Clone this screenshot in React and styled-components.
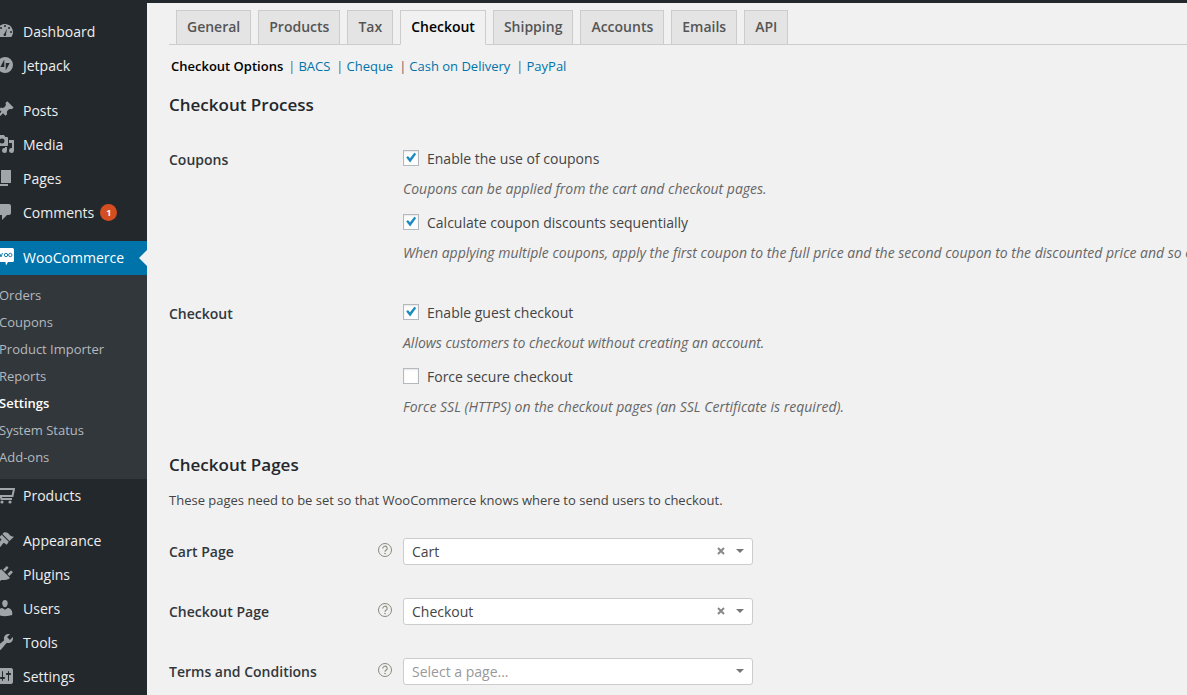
import React from 'react';
import styled, { createGlobalStyle } from 'styled-components';

const GlobalStyle = createGlobalStyle`
	html, body {
		margin: 0;
		padding: 0;
		background: #f1f1f1;
		overflow: hidden;
	}
	body {
		font-family: "Open Sans", "Liberation Sans", sans-serif;
		font-size: 14px;
		color: #444;
	}
`;

const icons = {
	dashboard: <><path fillRule="evenodd" d="M3.760 16h12.480C17.340 14.630 18 12.890 18 11c0-4.420-3.580-8-8-8s-8 3.580-8 8c0 1.890.66 3.630 1.760 5zM10 4a1 1 0 1 1 0 2 1 1 0 0 1 0-2zM6 6a1 1 0 1 1 0 2 1 1 0 0 1 0-2zm8 0a1 1 0 1 1 0 2 1 1 0 0 1 0-2zM4 10a1 1 0 1 1 0 2 1 1 0 0 1 0-2zm12 0a1 1 0 1 1 0 2 1 1 0 0 1 0-2z" /><path d="M12 7.500 9.500 12.500a1.300 1.300 0 1 0 1.500.6z" fill="#23282d" /></>,
	jetpack: <path fillRule="evenodd" d="M10 2a8 8 0 1 0 0 16 8 8 0 0 0 0-16zM9.300 4.500v7.500H5.300zM10.700 15.500V8h4z" />,
	posts: <path d="M10.440 3.020l1.820-1.820 6.360 6.350-1.830 1.820c-1.050-.68-2.480-.57-3.410.36l-.75.75c-.92.930-1.040 2.350-.35 3.410l-1.830 1.820-2.410-2.410-2.800 2.790c-.42.420-3.380 2.710-3.800 2.290s1.860-3.390 2.280-3.810l2.790-2.790L4.100 9.360l1.830-1.820c1.050.69 2.480.57 3.400-.36l.75-.75c.93-.92 1.050-2.350.36-3.410z" />,
	media: <path fillRule="evenodd" d="M13 11V4c0-.55-.45-1-1-1h-1.670L9 1H5L3.670 3H2c-.55 0-1 .45-1 1v7c0 .55.45 1 1 1h10c.55 0 1-.45 1-1zM7 4.500a2.500 2.500 0 1 1 0 5 2.500 2.500 0 0 1 0-5zM14 6h5v10.500a2.500 2.500 0 1 1-2-2.450V9h-3V6zm-4 8.050V13h2v3.500a2.500 2.500 0 1 1-2-2.450z" />,
	pages: <path d="M6 15V2h10v13H6zm-1 1h8v2H3V5h2v11z" />,
	comments: <path d="M5 2h9c1.100 0 2 .9 2 2v7c0 1.100-.9 2-2 2h-2l-5 5v-5H5c-1.100 0-2-.9-2-2V4c0-1.100.9-2 2-2z" />,
	products: <><path d="M2 4h17l-1.500 7H5.500L6.500 14H17" fill="none" stroke="#a0a5aa" strokeWidth="2" /><circle cx="7" cy="17" r="1.600" /><circle cx="15" cy="17" r="1.600" /></>,
	appearance: <path d="M14.480 11.060 7.410 3.990l1.500-1.500c.5-.56 2.300-.47 3.510.32 1.210.8 1.430 1.280 2.660 2.420 1.200 1.100 2.300 1.500 3.920 1.400zm-.71.71L6.700 4.700 4.930 6.470c-.39.390-.39 1.020 0 1.410l1.060 1.060c.39.390.39 1.030 0 1.420-.6.600-1.430 1.110-2.210 1.690-.35.260-.7.530-1.010.840C1.430 13.230.7 14.700 1.200 15.200s3.300 2.600 4.500 1.300c.3-.3.600-.7.860-1.050.58-.78 1.080-1.610 1.680-2.210.39-.39 1.030-.39 1.420 0l1.060 1.060c.39.390 1.020.39 1.410 0z" />,
	plugins: <path d="M13.110 4.360 9.870 7.600 8 5.730l3.240-3.240c.35-.34 1.050-.2 1.560.32.520.510.660 1.210.310 1.550zm-8 1.770.91-1.120 9.010 9.010-1.190.84c-.71.710-2.630 1.160-3.820 1.160H6.140L4.900 17.260c-.59.590-1.540.590-2.120 0-.59-.580-.59-1.530 0-2.120l1.240-1.240v-3.880c0-1.130.46-3.050 1.090-3.890zm7.260 3.970 3.240-3.240c.34-.35 1.040-.21 1.550.31.520.510.660 1.210.310 1.550l-3.240 3.250z" />,
	users: <path d="M10 9.250c-2.270 0-2.730-3.440-2.730-3.440C7 4.020 7.820 2 9.970 2c2.160 0 2.980 2.020 2.710 3.810 0 0-.41 3.440-2.680 3.440zm0 2.570L12.720 10c2.390 0 4.520 2.330 4.520 4.530v2.490s-3.650 1.130-7.240 1.130c-3.650 0-7.240-1.130-7.240-1.130v-2.490c0-2.250 1.940-4.480 4.470-4.480z" />,
	tools: <path d="M16.680 9.770c-1.340 1.340-3.300 1.670-4.950.99l-5.410 6.520c-.99.990-2.590.990-3.580 0s-.99-2.590 0-3.580l6.520-5.420c-.68-1.650-.35-3.610.99-4.950 1.280-1.280 3.120-1.640 4.720-1.110l-2.900 2.890 2.820 2.820 2.860-2.860c.53 1.600.17 3.440-1.110 4.720z" />,
	settings: <path fillRule="evenodd" d="M18 16V4c0-1.100-.9-2-2-2H4c-1.100 0-2 .9-2 2v12c0 1.100.9 2 2 2h12c1.100 0 2-.9 2-2zM8 11h1c.55 0 1 .45 1 1s-.45 1-1 1H8v1.500c0 .28-.22.5-.5.5s-.5-.22-.5-.5V13H6c-.55 0-1-.45-1-1s.45-1 1-1h1V5.500c0-.28.22-.5.5-.5s.5.220.5.5V11zm5-2h-1c-.55 0-1-.45-1-1s.45-1 1-1h1V5.500c0-.28.22-.5.5-.5s.5.220.5.5V7h1c.55 0 1 .45 1 1s-.45 1-1 1h-1v5.500c0 .28-.22.5-.5.5s-.5-.22-.5-.5V9z" />,
};

const menuTop = [
	[['dashboard', 'Dashboard'], ['jetpack', 'Jetpack']],
	[['posts', 'Posts'], ['media', 'Media'], ['pages', 'Pages'], ['comments', 'Comments', 1]],
];

const menuBottom = [
	[['products', 'Products']],
	[['appearance', 'Appearance'], ['plugins', 'Plugins'], ['users', 'Users'], ['tools', 'Tools'], ['settings', 'Settings']],
];

const subItems = ['Orders', 'Coupons', 'Product Importer', 'Reports', 'Settings', 'System Status', 'Add-ons'];
const tabs = ['General', 'Products', 'Tax', 'Checkout', 'Shipping', 'Accounts', 'Emails', 'API'];
const sections = ['BACS', 'Cheque', 'Cash on Delivery', 'PayPal'];

const MenuGroups = ({ groups }) => groups.map((group, i) => (
	<MenuGroup key={i}>
		{group.map(([icon, label, count]) => (
			<MenuItem key={label}>
				<MenuIcon viewBox="0 0 20 20">{icons[icon]}</MenuIcon>
				{label}
				{count && <Badge>{count}</Badge>}
			</MenuItem>
		))}
	</MenuGroup>
));

const CheckOption = ({ checked, label, description }) => (
	<>
		<OptionRow>
			<CheckBox>
				{checked && (
					<svg viewBox="0 0 16 16" width="16" height="16">
						<path d="M2.500 7.500 4.500 5.800 6.800 8.300 11.800 2 14 3.500 7 13z" fill="#1e8cbe" />
					</svg>
				)}
			</CheckBox>
			{label}
		</OptionRow>
		<Description>{description}</Description>
	</>
);

const HelpTip = () => (
	<HelpIcon viewBox="0 0 16 16">
		<circle cx="8" cy="8" r="6.500" fill="none" stroke="#8a8a7a" strokeWidth="1" />
		<path d="M5.800 6.400A2.200 2.200 0 1 1 9 8.300c-.7.400-1 .7-1 1.500" fill="none" stroke="#8a8a7a" strokeWidth="1.100" />
		<circle cx="8" cy="11.500" r=".8" fill="#8a8a7a" />
	</HelpIcon>
);

const PageSelect = ({ label, value, placeholder }) => (
	<SelectRow>
		<SelectLabel>{label}</SelectLabel>
		<HelpTip />
		<SelectBox>
			<SelectValue $placeholder={!value}>{value || placeholder}</SelectValue>
			{value && (
				<ClearIcon viewBox="0 0 8 8">
					<path d="M1 1l6 6M7 1 1 7" stroke="#888" strokeWidth="2" />
				</ClearIcon>
			)}
			<Caret />
		</SelectBox>
	</SelectRow>
);

const App = () => (
	<>
		<GlobalStyle />
		<Page>
			<Sidebar>
				<MenuGroups groups={menuTop} />
				<ActiveItem>
					<WooLogo viewBox="0 0 20 20">
						<path d="M1.500 1h16A1.500 1.500 0 0 1 19 2.500v11a1.500 1.500 0 0 1-1.500 1.500H13l-2 3.500-.5-3.500h-9A1.500 1.500 0 0 1 0 13.500v-11A1.500 1.500 0 0 1 1.500 1z" fill="#fff" />
						<path d="M2.500 6l1 4 1.500-3 1 3L7.500 6" fill="none" stroke="#0073aa" strokeWidth=".9" />
						<circle cx="11" cy="8" r="1.700" fill="none" stroke="#0073aa" strokeWidth=".9" />
						<circle cx="15.300" cy="8" r="1.700" fill="none" stroke="#0073aa" strokeWidth=".9" />
					</WooLogo>
					WooCommerce
					<ActiveArrow />
				</ActiveItem>
				<SubMenu>
					{subItems.map((item) => (
						<SubItem key={item} $current={item === 'Settings'}>{item}</SubItem>
					))}
				</SubMenu>
				<MenuGroups groups={menuBottom} />
			</Sidebar>
			<Main>
				<TabBar>
					{tabs.map((tab) => (
						<Tab key={tab} $active={tab === 'Checkout'}>{tab}</Tab>
					))}
				</TabBar>
				<SubNav>
					<strong>Checkout Options</strong>
					{sections.map((section) => (
						<SubNavItem key={section}>
							<Divider>|</Divider>
							<SubNavLink>{section}</SubNavLink>
						</SubNavItem>
					))}
				</SubNav>

				<ProcessHeading>Checkout Process</ProcessHeading>
				<FormTable>
					<FormRow>
						<RowLabel>Coupons</RowLabel>
						<div>
							<CheckOption checked label="Enable the use of coupons" description="Coupons can be applied from the cart and checkout pages." />
							<CheckOption checked label="Calculate coupon discounts sequentially" description="When applying multiple coupons, apply the first coupon to the full price and the second coupon to the discounted price and so on." />
						</div>
					</FormRow>
					<FormRow>
						<RowLabel>Checkout</RowLabel>
						<div>
							<CheckOption checked label="Enable guest checkout" description="Allows customers to checkout without creating an account." />
							<CheckOption label="Force secure checkout" description="Force SSL (HTTPS) on the checkout pages (an SSL Certificate is required)." />
						</div>
					</FormRow>
				</FormTable>

				<PagesHeading>Checkout Pages</PagesHeading>
				<Intro>These pages need to be set so that WooCommerce knows where to send users to checkout.</Intro>
				<PageSelect label="Cart Page" value="Cart" />
				<PageSelect label="Checkout Page" value="Checkout" />
				<PageSelect label="Terms and Conditions" placeholder="Select a page..." />
			</Main>
		</Page>
	</>
);

const Page = styled.div`
	display: flex;
	height: 695px;
	width: 1187px;
	overflow: hidden;
	background: #f1f1f1;
	border-top: 3px solid #23282d;
	box-sizing: border-box;
`;

const Sidebar = styled.nav`
	width: 147px;
	flex-shrink: 0;
	background: #23282d;
	padding-top: 12px;
	overflow: hidden;
`;

const MenuGroup = styled.div`
	margin-bottom: 11px;

	&:last-of-type {
		margin-bottom: 0;
	}
`;

const MenuItem = styled.div`
	display: flex;
	align-items: center;
	height: 34px;
	box-sizing: border-box;
	padding-bottom: 2px;
	color: #eee;
	white-space: nowrap;
`;

const MenuIcon = styled.svg`
	width: 20px;
	height: 20px;
	flex-shrink: 0;
	margin: 0 8px 0 -5px;
	fill: #a0a5aa;
`;

const Badge = styled.span`
	display: inline-flex;
	align-items: center;
	justify-content: center;
	width: 17px;
	height: 17px;
	margin-left: 6px;
	border-radius: 50%;
	background: #d54e21;
	color: #fff;
	font-size: 9px;
	font-weight: 700;
`;

const ActiveItem = styled(MenuItem)`
	position: relative;
	background: #0073aa;
	color: #fff;
`;

const WooLogo = styled.svg`
	width: 20px;
	height: 20px;
	flex-shrink: 0;
	margin: 0 8px 0 -5px;
`;

const ActiveArrow = styled.span`
	position: absolute;
	right: 0;
	top: 50%;
	margin-top: -8px;
	border: 8px solid transparent;
	border-right-color: #f1f1f1;
	border-left-width: 0;
`;

const SubMenu = styled.div`
	background: #32373c;
	padding: 7px 0 8px;
`;

const SubItem = styled.div`
	height: 27px;
	line-height: 27px;
	font-size: 13px;
	margin-left: -1px;
	white-space: nowrap;
	color: ${(p) => (p.$current ? '#fff' : '#b4b9be')};
	font-weight: ${(p) => (p.$current ? 600 : 400)};
`;

const Main = styled.main`
	flex: 1;
	min-width: 0;
	padding: 7px 0 0 22px;
	overflow: hidden;
`;

const TabBar = styled.div`
	display: flex;
	gap: 7px;
	padding-left: 7px;
	height: 34px;
	border-bottom: 1px solid #ccc;
`;

const Tab = styled.div`
	height: 35px;
	box-sizing: border-box;
	padding: 0 10px;
	line-height: 31px;
	font-weight: 600;
	white-space: nowrap;
	color: ${(p) => (p.$active ? '#000' : '#555')};
	background: ${(p) => (p.$active ? '#f1f1f1' : '#e4e4e4')};
	border: 1px solid #ccc;
	border-bottom-color: ${(p) => (p.$active ? '#f1f1f1' : '#ccc')};
`;

const SubNav = styled.div`
	display: flex;
	align-items: center;
	height: 20px;
	margin: 11px 0 0 2px;
	font-size: 13px;
	white-space: nowrap;

	strong {
		font-weight: 600;
		color: #000;
		margin-right: -1px;
	}
`;

const SubNavItem = styled.span`
	display: inline-flex;
	align-items: center;
`;

const Divider = styled.span`
	color: #666;
	margin: 0 3px 0 6px;
`;

const SubNavLink = styled.span`
	color: #0073aa;
`;

const Heading = styled.h2`
	margin: 0;
	font-size: 17px;
	line-height: 24px;
	font-weight: 600;
	color: #23282d;
`;

const ProcessHeading = styled(Heading)`
	margin: 17px 0 32px;
`;

const PagesHeading = styled(Heading)`
	margin: 22px 0 13px;
`;

const FormTable = styled.div`
	display: flex;
	flex-direction: column;
	gap: 26px;
`;

const FormRow = styled.div`
	display: grid;
	grid-template-columns: 234px 800px;
`;

const RowLabel = styled.div`
	font-weight: 600;
	line-height: 20px;
	padding-top: 1px;
	color: #32373c;
`;

const OptionRow = styled.label`
	display: flex;
	align-items: center;
	gap: 8px;
	height: 20px;
	box-sizing: border-box;
	padding-bottom: 2px;
	white-space: nowrap;
`;

const CheckBox = styled.span`
	width: 16px;
	height: 16px;
	box-sizing: border-box;
	flex-shrink: 0;
	display: flex;
	align-items: center;
	justify-content: center;
	border: 1px solid #b4b9be;
	background: #fff;
	box-shadow: inset 0 1px 2px rgba(0, 0, 0, 0.1);
`;

const Description = styled.p`
	margin: 10px 0 14px;
	line-height: 20px;
	font-style: italic;
	color: #666;
	white-space: nowrap;
`;

const Intro = styled.p`
	margin: 0 0 28px;
	font-size: 13px;
	line-height: 20px;
	color: #444;
`;

const SelectRow = styled.div`
	display: grid;
	grid-template-columns: 208px 26px 350px;
	align-items: center;
	height: 27px;
	margin-bottom: 33px;
`;

const SelectLabel = styled.div`
	font-weight: 600;
	color: #32373c;
`;

const HelpIcon = styled.svg`
	width: 16px;
	height: 16px;
	margin-bottom: 4px;
`;

const SelectBox = styled.div`
	display: flex;
	align-items: center;
	height: 27px;
	box-sizing: border-box;
	padding: 0 8px 0 8px;
	background: #fff;
	border: 1px solid #ccc;
	border-radius: 3px;
`;

const SelectValue = styled.span`
	flex: 1;
	color: ${(p) => (p.$placeholder ? '#999' : '#444')};
`;

const ClearIcon = styled.svg`
	width: 8px;
	height: 8px;
	margin: 0 11px 2px 0;
`;

const Caret = styled.span`
	width: 0;
	height: 0;
	margin-bottom: 1px;
	border-style: solid;
	border-width: 4px 4px 0;
	border-color: #777 transparent transparent;
`;

export default App;
